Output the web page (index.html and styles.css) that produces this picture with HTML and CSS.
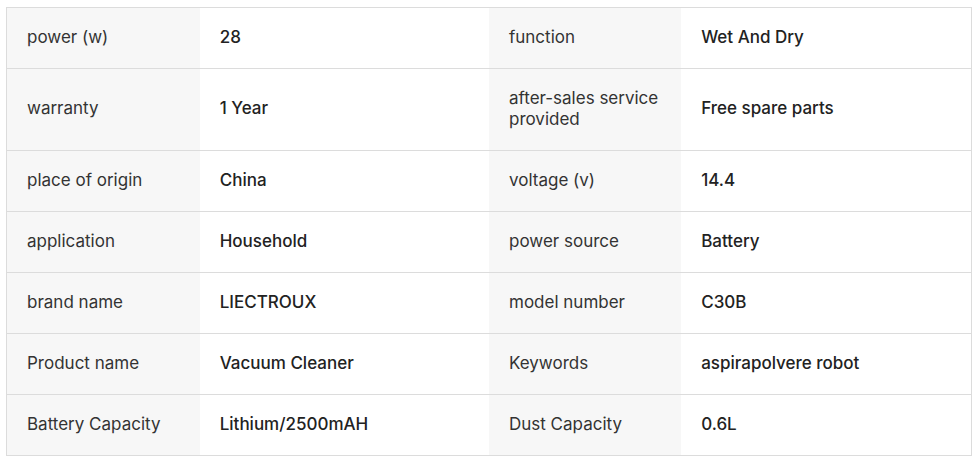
FILE: index.html
```html
<!DOCTYPE html>
<html>
<head>
<meta charset="utf-8">
<link rel="stylesheet" href="styles.css">
</head>
<body>
<table class="spec">
  <colgroup>
    <col class="c-label1"><col class="c-value1"><col class="c-label2"><col class="c-value2">
  </colgroup>
  <tbody>
    <tr><td class="label">power (w)</td><td class="value">28</td><td class="label">function</td><td class="value">Wet And Dry</td></tr>
    <tr><td class="label">warranty</td><td class="value">1 Year</td><td class="label">after-sales service provided</td><td class="value">Free spare parts</td></tr>
    <tr><td class="label">place of origin</td><td class="value">China</td><td class="label">voltage (v)</td><td class="value">14.4</td></tr>
    <tr><td class="label">application</td><td class="value">Household</td><td class="label">power source</td><td class="value">Battery</td></tr>
    <tr><td class="label">brand name</td><td class="value">LIECTROUX</td><td class="label">model number</td><td class="value">C30B</td></tr>
    <tr><td class="label">Product name</td><td class="value">Vacuum Cleaner</td><td class="label">Keywords</td><td class="value">aspirapolvere robot</td></tr>
    <tr><td class="label">Battery Capacity</td><td class="value">Lithium/2500mAH</td><td class="label">Dust Capacity</td><td class="value">0.6L</td></tr>
  </tbody>
</table>
</body>
</html>
```
FILE: styles.css
```css
html, body {
  margin: 0;
  padding: 0;
  background: #fff;
}
body {
  padding: 7px 5px 0 6px;
  font-family: Inter, "Noto Sans", sans-serif;
}
.spec {
  width: 966px;
  border-collapse: collapse;
  table-layout: fixed;
  border: 1px solid #dcdcdc;
}
.c-label1 { width: 193px; }
.c-value1 { width: 289px; }
.c-label2 { width: 192px; }
.c-value2 { width: 290px; }
.spec td {
  border-top: 1px solid #dcdcdc;
  border-bottom: 1px solid #dcdcdc;
  padding: 18.5px 20px 20.5px 20px;
  font-size: 17px;
  line-height: 21px;
  vertical-align: middle;
}
.label {
  background: #f7f7f7;
  color: #333;
  font-weight: 400;
}
.value {
  background: #fff;
  color: #222;
  font-weight: 500;
}
```
